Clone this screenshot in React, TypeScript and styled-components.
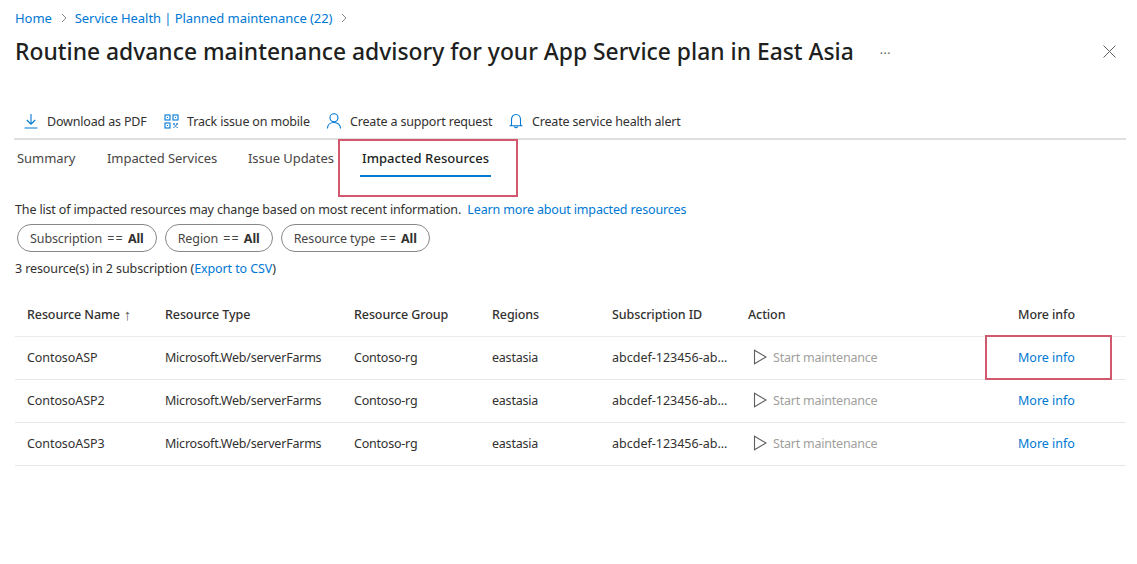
import React from "react";
import styled, { createGlobalStyle } from "styled-components";

const Global = createGlobalStyle`
  html, body { margin: 0; padding: 0; background: #fff; }
  body { font-family: "Noto Sans", "Open Sans", sans-serif; color: #323130; font-size: 13px; }
`;
const Page = styled.div`
  width: 1137px; height: 564px; box-sizing: border-box; padding: 9px 11px 0 15px; overflow: hidden;
`;
const Crumbs = styled.nav`
  display: flex; align-items: center; height: 17px; font-size: 13px; letter-spacing: -0.06px; color: #0078d4;
`;
const Chevron = styled.svg`
  width: 8px; height: 10px; margin: 0 7px 0 8px; flex: none;
`;
const TitleRow = styled.div`
  display: flex; align-items: center; height: 34px; margin-top: 8px;
`;
const Title = styled.h1`
  margin: 0; font-size: 22.85px; font-weight: 500; color: #201f1e; white-space: nowrap;
`;
const Dots = styled.span`
  margin-left: 26px; font-size: 12px; line-height: 12px; color: #605e5c; letter-spacing: 0.5px; position: relative; top: 3px;
`;
const Close = styled.svg`
  width: 13px; height: 13px; margin-left: auto; margin-right: 10px; flex: none;
`;
const Toolbar = styled.div`
  display: flex; align-items: center; height: 32px; margin: 37px 0 0 -1px; padding: 0 0 1px 9px; border-bottom: 2px solid #e1dfdd;
`;
const ToolButton = styled.div<{ $w: number }>`
  display: flex; align-items: center; width: ${p => p.$w}px; flex: none; font-size: 12.5px; letter-spacing: -0.17px; white-space: nowrap;
  svg { flex: none; margin-right: 8px; }
`;
const Tabs = styled.div`
  display: flex; align-items: flex-start; padding-top: 9px; height: 27px; position: relative; margin-left: 2px;
`;
const Tab = styled.div<{ $w: number; $active?: boolean }>`
  width: ${p => p.$w}px; flex: none; font-size: 13px; letter-spacing: ${p => (p.$active ? "0.05px" : "-0.06px")}; color: ${p => (p.$active ? "#201f1e" : "#484644")}; font-weight: ${p => (p.$active ? 500 : 400)}; white-space: nowrap; line-height: 18px;
`;
const ActiveLabel = styled.span`
  display: inline-block; position: relative; padding: 0 2px; margin-left: -2px;
  &::after { content: ""; position: absolute; left: 0; right: 0; top: 26px; height: 2px; background: #0078d4; }
`;
const Highlight = styled.div`
  position: absolute; border: 2px solid #d1596d; box-sizing: border-box; pointer-events: none;
`;
const TabHighlight = styled(Highlight)`
  left: 321px; top: -1px; width: 180px; height: 58px;
`;
const Info = styled.div`
  margin-top: 25px; line-height: 18px; font-size: 12.5px; letter-spacing: -0.15px; white-space: nowrap;
`;
const Link = styled.a`
  color: #0078d4; text-decoration: none;
`;
const Chips = styled.div`
  display: flex; gap: 8px; margin-top: 5px; margin-left: 2px;
`;
const Chip = styled.div`
  height: 28px; box-sizing: border-box; border: 1px solid #8a8886; border-radius: 14px; padding: 0 12px; display: flex; align-items: center; font-size: 12.5px; letter-spacing: -0.1px; white-space: nowrap; color: #484644;
  b { font-weight: 700; color: #323130; margin-left: 4px; }
`;
const Operator = styled.span`
  margin-left: 5px; letter-spacing: 1.2px;
`;
const Count = styled.div`
  margin-top: 8px; line-height: 18px; font-size: 12.5px; letter-spacing: -0.1px;
`;
const Table = styled.div`
  margin-top: 16px; position: relative; display: grid;
  grid-template-columns: 12px 138px 189px 138px 120px 136px 270px 1fr;
  grid-auto-rows: 43px; font-size: 12.5px;
`;
const Row = styled.div`
  display: contents;
`;
const Cell = styled.div<{ $ls?: number }>`
  display: flex; align-items: center; white-space: nowrap; height: 40px; padding-bottom: 2px; border-bottom: 1px solid #e8e6e4; letter-spacing: ${p => p.$ls ?? -0.22}px;
`;
const HeadCell = styled(Cell)`
  font-weight: 500; height: 41px; padding-bottom: 1px; border-bottom-color: #edebe9; letter-spacing: -0.1px;
`;
const SortArrow = styled.span`
  margin-left: 4px; color: #605e5c; font-size: 15px; line-height: 15px;
`;
const Action = styled(Cell)`
  color: #a19f9d; padding-left: 5px;
  svg { margin-right: 6px; flex: none; }
`;
const MoreHighlight = styled(Highlight)`
  left: 970px; top: 41px; width: 127px; height: 45px;
`;

const Arrow = () => (
  <Chevron viewBox="0 0 8 10"><path d="M2 1l4 4-4 4" fill="none" stroke="#8a8886" strokeWidth="1" /></Chevron>
);
const Download = () => (
  <svg width="16" height="16" viewBox="0 0 16 16" fill="none" stroke="#0078d4" strokeWidth="1.1">
    <path d="M8 1v10M3.800 7L8 11.200 12.200 7M1.500 15h13" />
  </svg>
);
const Qr = () => (
  <svg width="15" height="15" viewBox="0 0 15 15" fill="none" stroke="#0078d4" strokeWidth="1.1">
    <rect x="1" y="1" width="5" height="5" /><rect x="9" y="1" width="5" height="5" /><rect x="1" y="9" width="5" height="5" />
    <path d="M3 3h1v1H3zM11 3h1v1h-1zM3 11h1v1H3z" fill="#0078d4" stroke="none" />
    <path d="M9 9h2v2H9zM12 9h2v2h-2zM10.500 11h2v2h-2zM9 13h1.500v1H9zM12.500 13H14v1h-1.500z" fill="#5c9fd8" stroke="none" />
  </svg>
);
const Person = () => (
  <svg width="16" height="16" viewBox="0 0 16 16" fill="none" stroke="#0078d4" strokeWidth="1.1">
    <circle cx="8" cy="4.800" r="4" /><path d="M1.500 15.500c0-3.500 2.500-6 6.500-6s6.500 2.500 6.500 6" />
  </svg>
);
const Bell = () => (
  <svg width="16" height="16" viewBox="0 0 16 16" fill="none" stroke="#0078d4" strokeWidth="1.1">
    <path d="M3.500 12V6.500C3.500 3.500 5.500 1.500 8 1.500s4.500 2 4.500 5V12l1 .8h-11zM6.500 13.500c.3 1 .8 1.300 1.500 1.300s1.200-.3 1.500-1.300" />
  </svg>
);
const Play = () => (
  <svg width="14" height="16" viewBox="0 0 14 16" fill="none" stroke="#605e5c" strokeWidth="1.1">
    <path d="M1.500 1.200v13.600L13 8z" />
  </svg>
);

const rows = ["ContosoASP", "ContosoASP2", "ContosoASP3"];

export default function App() {
  return (
    <Page>
      <Global />
      <Crumbs>
        <span>Home</span><Arrow /><span>Service Health | Planned maintenance (22)</span><Arrow />
      </Crumbs>
      <TitleRow>
        <Title>Routine advance maintenance advisory for your App Service plan in East Asia</Title>
        <Dots>···</Dots>
        <Close viewBox="0 0 13 13"><path d="M.5.500l12 12M12.500.500l-12 12" stroke="#605e5c" strokeWidth="1" fill="none" /></Close>
      </TitleRow>
      <Toolbar>
        <ToolButton $w={141}><Download />Download as PDF</ToolButton>
        <ToolButton $w={162}><Qr />Track issue on mobile</ToolButton>
        <ToolButton $w={182}><Person />Create a support request</ToolButton>
        <ToolButton $w={200}><Bell />Create service health alert</ToolButton>
      </Toolbar>
      <Tabs>
        <Tab $w={90}>Summary</Tab>
        <Tab $w={141}>Impacted Services</Tab>
        <Tab $w={114}>Issue Updates</Tab>
        <Tab $w={140} $active><ActiveLabel>Impacted Resources</ActiveLabel></Tab>
        <TabHighlight />
      </Tabs>
      <Info>
        The list of impacted resources may change based on most recent information.&nbsp; <Link>Learn more about impacted resources</Link>
      </Info>
      <Chips>
        <Chip>Subscription<Operator>==</Operator><b>All</b></Chip>
        <Chip>Region<Operator>==</Operator><b>All</b></Chip>
        <Chip>Resource type<Operator>==</Operator><b>All</b></Chip>
      </Chips>
      <Count>3 resource(s) in 2 subscription (<Link>Export to CSV</Link>)</Count>
      <Table>
        <Row>
          <HeadCell /><HeadCell>Resource Name<SortArrow>↑</SortArrow></HeadCell><HeadCell>Resource Type</HeadCell><HeadCell>Resource Group</HeadCell><HeadCell>Regions</HeadCell><HeadCell>Subscription ID</HeadCell><HeadCell>Action</HeadCell><HeadCell>More info</HeadCell>
        </Row>
        {rows.map(name => (
          <Row key={name}>
            <Cell /><Cell $ls={-0.08}>{name}</Cell><Cell>Microsoft.Web/serverFarms</Cell><Cell>Contoso-rg</Cell><Cell>eastasia</Cell><Cell $ls={0}>abcdef-123456-ab...</Cell>
            <Action><Play />Start maintenance</Action>
            <Cell $ls={0}><Link>More info</Link></Cell>
          </Row>
        ))}
        <MoreHighlight />
      </Table>
    </Page>
  );
}
